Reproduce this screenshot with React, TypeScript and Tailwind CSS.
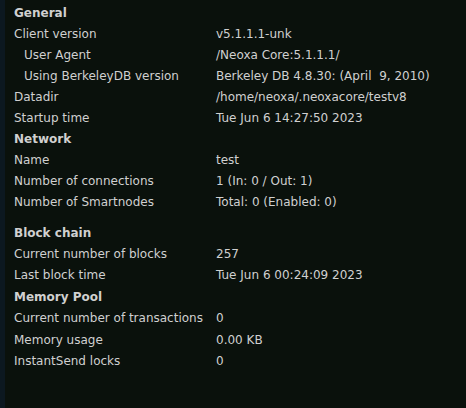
const sections: { title: string; rows: [string, string, boolean?][]; loose?: boolean; gapBefore?: boolean }[] = [
  {
    title: "General",
    rows: [
      ["Client version", "v5.1.1.1-unk"],
      ["User Agent", "/Neoxa Core:5.1.1.1/", true],
      ["Using BerkeleyDB version", "Berkeley DB 4.8.30: (April  9, 2010)", true],
      ["Datadir", "/home/neoxa/.neoxacore/testv8"],
      ["Startup time", "Tue Jun 6 14:27:50 2023"],
    ],
  },
  {
    title: "Network",
    rows: [
      ["Name", "test"],
      ["Number of connections", "1 (In: 0 / Out: 1)"],
      ["Number of Smartnodes", "Total: 0 (Enabled: 0)"],
    ],
  },
  {
    title: "Block chain",
    gapBefore: true,
    loose: true,
    rows: [
      ["Current number of blocks", "257"],
      ["Last block time", "Tue Jun 6 00:24:09 2023"],
    ],
  },
  {
    title: "Memory Pool",
    loose: true,
    rows: [
      ["Current number of transactions", "0"],
      ["Memory usage", "0.00 KB"],
      ["InstantSend locks", "0"],
    ],
  },
];

export default function App() {
  return (
    <div
      className="flex h-[408px] w-[466px] overflow-hidden bg-[#0a110c] text-[12px] text-[#d0d0d0]"
      style={{ fontFamily: '"DejaVu Sans", sans-serif' }}
    >
      <div className="w-[5px] shrink-0 bg-[#0c1820]" />
      <div className="flex-1 pl-[9px] pt-[2px]">
        {sections.map((section) => (
          <div key={section.title} className={section.gapBefore ? "mt-[10px]" : ""}>
            <div className={`flex items-center font-bold ${section.loose ? "h-[21.4px]" : "h-[21px]"}`}>
              {section.title}
            </div>
            {section.rows.map(([label, value, indent]) => (
              <div
                key={label}
                className={`grid grid-cols-[202px_1fr] items-center ${section.loose ? "h-[21.4px]" : "h-[21px]"}`}
              >
                <span className={indent ? "pl-[10px]" : ""}>{label}</span>
                <span className="whitespace-pre">{value}</span>
              </div>
            ))}
          </div>
        ))}
      </div>
    </div>
  );
}
